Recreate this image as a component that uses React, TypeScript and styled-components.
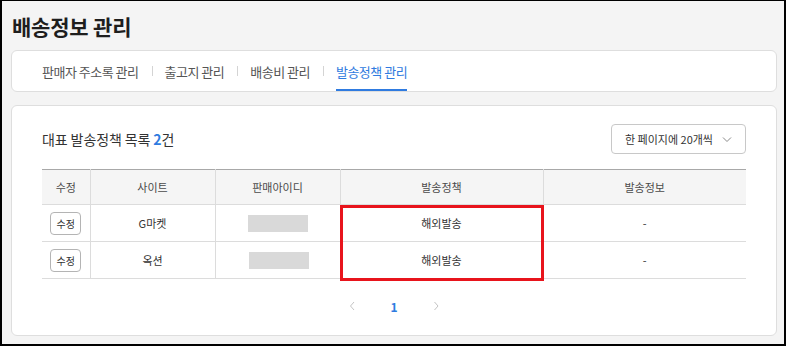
import React from "react";
import styled, { createGlobalStyle } from "styled-components";

const Global = createGlobalStyle`
  html, body { margin: 0; padding: 0; background: #f4f4f4; }
  * { box-sizing: border-box; }
  body { font-family: "Noto Sans CJK KR", "Noto Sans", sans-serif; }
`;

const Frame = styled.div`
  width: 786px;
  height: 346px;
  border: 2px solid #000;
  border-top-width: 1px;
  background: #f4f4f4;
  padding: 0 7px 8px 9px;
  display: flex;
  flex-direction: column;
  overflow: hidden;
`;

const Title = styled.h1`
  margin: 0;
  height: 49px;
  padding: 11px 0 0 1px;
  font-size: 21px;
  font-weight: 700;
  color: #1e1e1e;
  letter-spacing: -0.2px;
  line-height: 28px;
`;

const TabCard = styled.nav`
  height: 42px;
  background: #fff;
  border: 1px solid #dedede;
  border-radius: 6px;
  display: flex;
  align-items: stretch;
  padding-left: 30px;
`;

const Tab = styled.div<{ $active?: boolean }>`
  display: flex;
  align-items: center;
  padding: 2px 0 0;
  font-size: 13px;
  letter-spacing: -0.5px;
  color: ${(p) => (p.$active ? "#2f7be0" : "#555")};
  border-bottom: 2px solid ${(p) => (p.$active ? "#2f7be0" : "transparent")};
  white-space: nowrap;
`;

const TabSep = styled.span`
  align-self: center;
  width: 1px;
  height: 10px;
  margin: 0 12px 0 13px;
  background: #d4d4d4;
`;

const MainCard = styled.section`
  margin-top: 13px;
  flex: 1;
  background: #fff;
  border: 1px solid #dedede;
  border-radius: 6px;
  padding: 18px 30px 0 30px;
  display: flex;
  flex-direction: column;
`;

const HeadRow = styled.div`
  display: flex;
  align-items: center;
  justify-content: space-between;
  height: 30px;
  margin-bottom: 15px;
`;

const ListTitle = styled.h2`
  margin: 0;
  font-size: 14px;
  font-weight: 400;
  color: #333;
  letter-spacing: -0.1px;
`;

const Count = styled.strong`
  color: #2f7be0;
  font-weight: 700;
`;

const Select = styled.div`
  width: 135px;
  height: 30px;
  border: 1px solid #c8c8c8;
  border-radius: 4px;
  display: flex;
  align-items: center;
  justify-content: space-between;
  padding: 0 13px 0 13px;
  font-size: 11px;
  color: #333;
`;

const TableWrap = styled.div`
  position: relative;
`;

const Table = styled.table`
  width: 704px;
  border-collapse: collapse;
  table-layout: fixed;
  border-top: 1px solid #a8a8a8;
`;

const Th = styled.th<{ $w: number }>`
  width: ${(p) => p.$w}px;
  height: 35px;
  background: #f5f5f5;
  font-size: 11px;
  font-weight: 400;
  color: #4a4a4a;
  text-align: center;
  border-bottom: 1px solid #dcdcdc;
  border-left: 1px solid #dcdcdc;
  &:first-child { border-left: none; }
`;

const Td = styled.td`
  height: 37px;
  font-size: 11px;
  color: #333;
  text-align: center;
  border-bottom: 1px solid #dcdcdc;
  border-left: 1px solid #dcdcdc;
  &:first-child { border-left: none; }
`;

const EditButton = styled.button`
  width: 31px;
  height: 23px;
  padding: 0;
  border: 1px solid #b4b4b4;
  border-radius: 4px;
  background: #fff;
  font-family: inherit;
  font-size: 10px;
  color: #333;
  vertical-align: middle;
`;

const Masked = styled.span<{ $shift: number }>`
  display: inline-block;
  width: 60px;
  height: 17px;
  background: #d9d9d9;
  vertical-align: middle;
  margin-left: ${(p) => p.$shift}px;
`;

const Highlight = styled.div`
  position: absolute;
  left: 298px;
  top: 36px;
  width: 204px;
  height: 76px;
  border: 3px solid #e8141c;
  pointer-events: none;
`;

const Pager = styled.div`
  flex: 1;
  display: flex;
  align-items: center;
  justify-content: center;
  gap: 30px;
  padding-bottom: 2px;
`;

const PageArrow = styled.span`
  width: 12px;
  display: flex;
  justify-content: center;
  color: #c4c4c4;
`;

const PageNum = styled.span`
  font-size: 12px;
  font-weight: 700;
  color: #2f7be0;
  width: 12px;
  text-align: center;
`;

const Chevron = ({ dir }: { dir: "left" | "right" | "down" }) => {
  const d =
    dir === "down" ? "M1 1.5 L5 5.5 L9 1.5" : dir === "left" ? "M5 1 L1.5 5 L5 9" : "M1.5 1 L5 5 L1.5 9";
  const w = dir === "down" ? 10 : 7;
  const h = dir === "down" ? 7 : 10;
  return (
    <svg width={w} height={h} viewBox={`0 0 ${w} ${h}`} fill="none">
      <path d={d} stroke={dir === "down" ? "#8a8a8a" : "#c4c4c4"} strokeWidth="1" />
    </svg>
  );
};

const cols = [
  { label: "수정", w: 48 },
  { label: "사이트", w: 125 },
  { label: "판매아이디", w: 125 },
  { label: "발송정책", w: 203 },
  { label: "발송정보", w: 203 },
];

const rows = [
  { site: "G마켓", shift: 0, policy: "해외발송", info: "-" },
  { site: "옥션", shift: 2, policy: "해외발송", info: "-" },
];

const tabs = ["판매자 주소록 관리", "출고지 관리", "배송비 관리", "발송정책 관리"];

export default function App() {
  return (
    <>
      <Global />
      <Frame>
        <Title>배송정보 관리</Title>
        <TabCard>
          {tabs.map((t, i) => (
            <React.Fragment key={t}>
              {i > 0 && <TabSep />}
              <Tab $active={i === 3}>{t}</Tab>
            </React.Fragment>
          ))}
        </TabCard>
        <MainCard>
          <HeadRow>
            <ListTitle>
              대표 발송정책 목록 <Count>2</Count>건
            </ListTitle>
            <Select>
              <span>한 페이지에 20개씩</span>
              <Chevron dir="down" />
            </Select>
          </HeadRow>
          <TableWrap>
            <Table>
              <thead>
                <tr>
                  {cols.map((c) => (
                    <Th key={c.label} $w={c.w}>
                      {c.label}
                    </Th>
                  ))}
                </tr>
              </thead>
              <tbody>
                {rows.map((r) => (
                  <tr key={r.site}>
                    <Td>
                      <EditButton>수정</EditButton>
                    </Td>
                    <Td>{r.site}</Td>
                    <Td>
                      <Masked $shift={r.shift} />
                    </Td>
                    <Td>{r.policy}</Td>
                    <Td>{r.info}</Td>
                  </tr>
                ))}
              </tbody>
            </Table>
            <Highlight />
          </TableWrap>
          <Pager>
            <PageArrow>
              <Chevron dir="left" />
            </PageArrow>
            <PageNum>1</PageNum>
            <PageArrow>
              <Chevron dir="right" />
            </PageArrow>
          </Pager>
        </MainCard>
      </Frame>
    </>
  );
}
